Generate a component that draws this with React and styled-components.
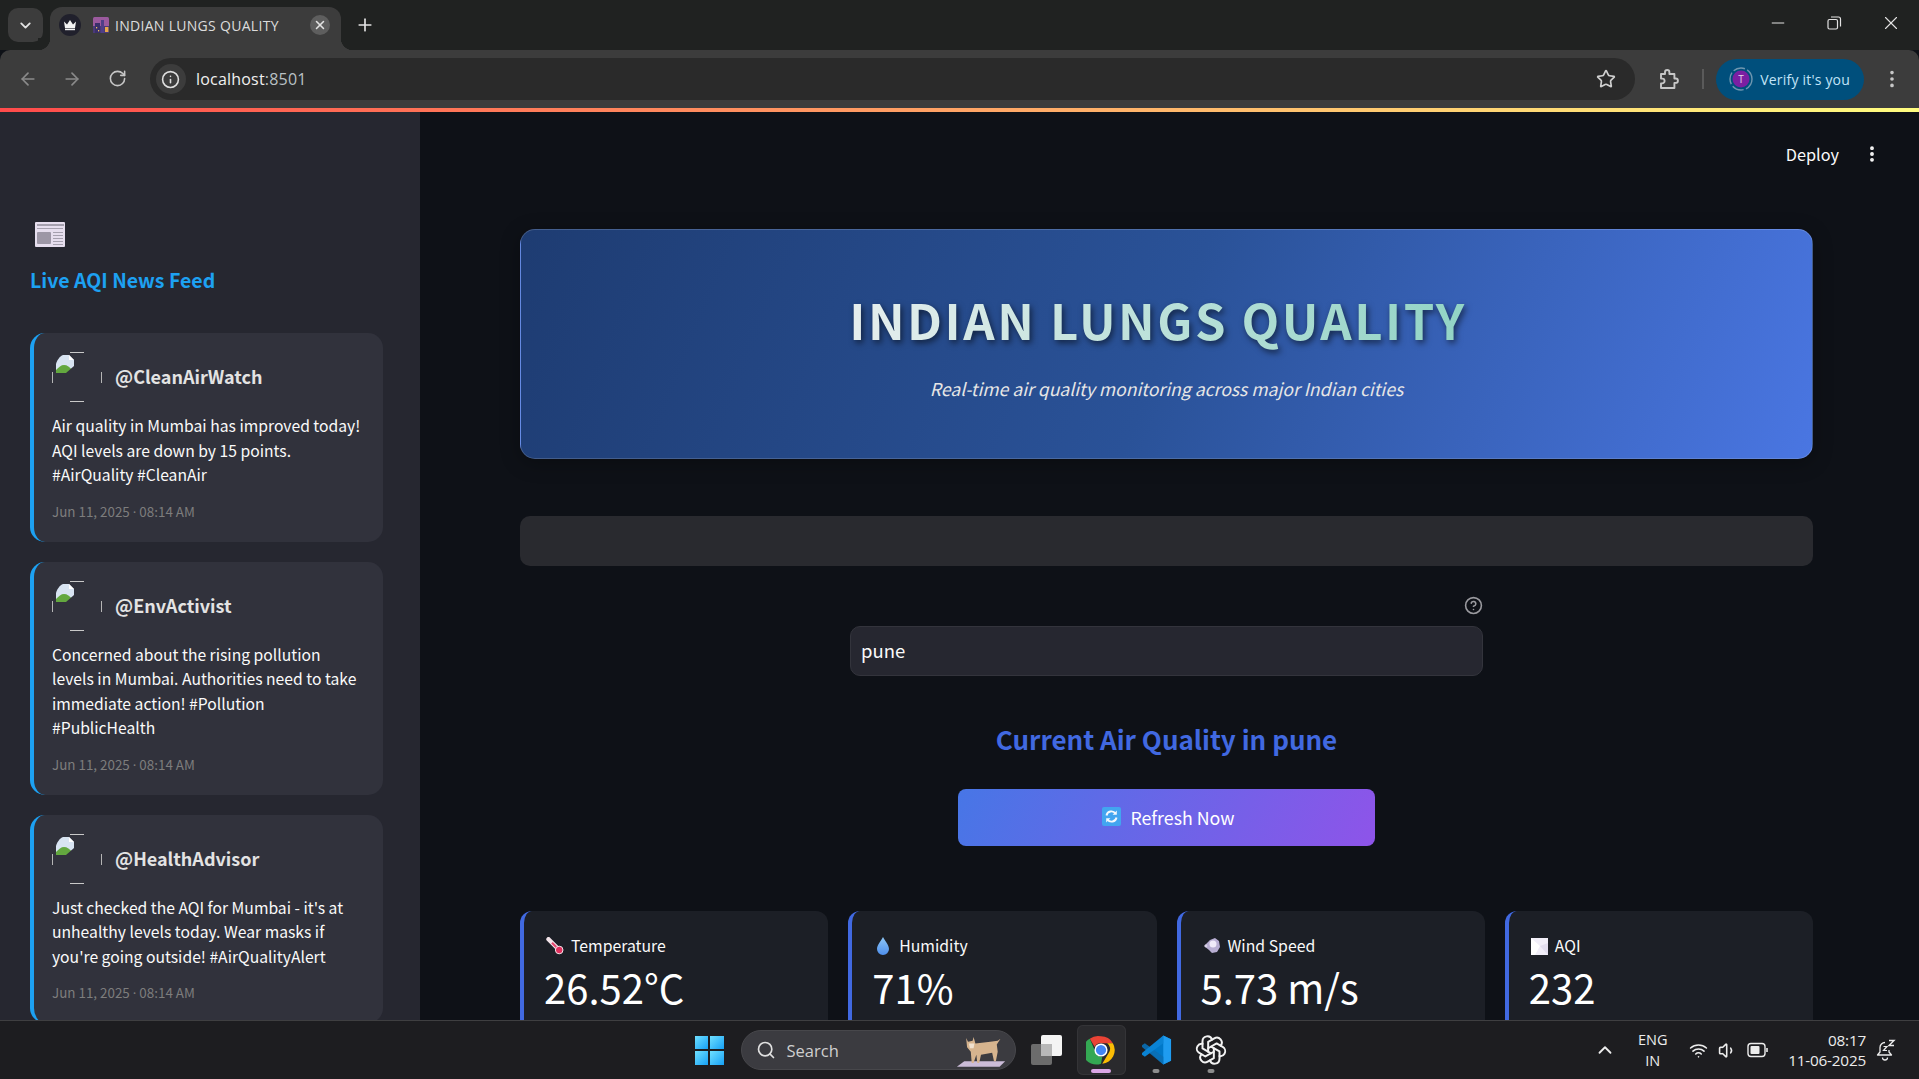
import React from "react";
import styled, { createGlobalStyle } from "styled-components";
import {
  ArrowLeft,
  ArrowRight,
  ChevronDown,
  ChevronUp,
  Info,
  Minus,
  MoreVertical,
  Plus,
  RotateCw,
  Search,
  Star,
  Volume1,
  Wifi,
  X,
  CircleHelp,
} from "lucide-react";
import { TbBrandOpenai } from "react-icons/tb";

const streamFont = '"Noto Sans CJK SC", "Noto Sans", sans-serif';
const chromeFont = '"Open Sans", "Noto Sans", sans-serif';

const GlobalStyle = createGlobalStyle`
  html, body {
    margin: 0;
    height: 100%;
    overflow: hidden;
    background: #0e1117;
  }
  * { box-sizing: border-box; }
`;

const Screen = styled.div`
  width: 1919px;
  height: 1079px;
  display: flex;
  flex-direction: column;
  overflow: hidden;
`;

/* browser chrome */
const TabStrip = styled.div`
  height: 50px;
  flex: none;
  background: #202221;
  display: flex;
  align-items: flex-end;
  padding-left: 8px;
  color: #e3e3e3;
  font-family: ${chromeFont};
`;
const TabListButton = styled.div`
  width: 35px;
  height: 34px;
  margin-bottom: 8px;
  border-radius: 10px;
  background: #3c3c3c;
  display: flex;
  align-items: center;
  justify-content: center;
`;
const Tab = styled.div`
  width: 291px;
  height: 43px;
  margin-left: 7px;
  padding: 0 11px 7px 9px;
  border-radius: 12px 12px 0 0;
  background: #3c3c3c;
  display: flex;
  align-items: center;
  position: relative;
  &::before,
  &::after {
    content: "";
    position: absolute;
    bottom: 0;
    width: 12px;
    height: 12px;
  }
  &::before {
    left: -12px;
    background: radial-gradient(circle at 0 0, #202221 12px, #3c3c3c 12.5px);
  }
  &::after {
    right: -12px;
    background: radial-gradient(circle at 100% 0, #202221 12px, #3c3c3c 12.5px);
  }
`;
const TabBadge = styled.div`
  width: 22px;
  height: 22px;
  border-radius: 50%;
  background: #20202c;
  display: flex;
  align-items: center;
  justify-content: center;
  margin-right: 12px;
`;
const TabTitle = styled.span`
  flex: 1;
  margin-left: 6px;
  font-size: 14px;
  letter-spacing: 0.3px;
  color: #dcdcdc;
  white-space: nowrap;
`;
const TabClose = styled.div`
  width: 20px;
  height: 20px;
  border-radius: 50%;
  background: #5e5e5e;
  display: flex;
  align-items: center;
  justify-content: center;
`;
const NewTab = styled.div`
  margin: 0 auto 8px 14px;
  height: 34px;
  display: flex;
  align-items: center;
`;
const WindowControls = styled.div`
  display: flex;
  align-self: flex-start;
  height: 46px;
  align-items: center;
  padding-right: 17px;
  gap: 36px;
`;
const RestoreIcon = () => (
  <svg width="20" height="20" viewBox="0 0 20 20" fill="none" stroke="#e3e3e3" strokeWidth="1.2">
    <rect x="4" y="6.5" width="9.5" height="9.5" rx="1.5" />
    <path d="M7 4h7.5a2 2 0 0 1 2 2v7.5" />
  </svg>
);

const Toolbar = styled.div`
  height: 58px;
  flex: none;
  background: #3c3c3c;
  border-radius: 10px 10px 0 0;
  display: flex;
  align-items: center;
  padding: 0 16px 0 18px;
  font-family: ${chromeFont};
`;
const NavButton = styled.div`
  width: 20px;
  height: 20px;
  margin-right: ${(p) => p.$gap}px;
  display: flex;
  color: ${(p) => (p.$off ? "#8a8a8a" : "#c7c7c7")};
`;
const Omnibox = styled.div`
  width: 1488px;
  height: 42px;
  border-radius: 21px;
  background: #2a2a2a;
  display: flex;
  align-items: center;
  padding: 0 19px 0 6px;
`;
const InfoChip = styled.div`
  width: 30px;
  height: 30px;
  border-radius: 50%;
  background: #3c3c3c;
  display: flex;
  align-items: center;
  justify-content: center;
  color: #dedede;
  margin-right: 10px;
`;
const Url = styled.div`
  flex: 1;
  font-size: 16px;
  letter-spacing: 0.2px;
  color: #f0f0f0;
  span {
    color: #b9c0c4;
  }
`;
const ToolbarIcon = styled.div`
  display: flex;
  color: #c7c7c7;
  margin-left: ${(p) => p.$left}px;
`;
const ToolbarDivider = styled.div`
  width: 2px;
  height: 20px;
  background: #5a5a5a;
  margin-left: 22px;
`;
const VerifyPill = styled.div`
  width: 148px;
  height: 41px;
  margin-left: 12px;
  border-radius: 21px;
  background: #004f7c;
  display: flex;
  align-items: center;
  padding-left: 13px;
  gap: 7px;
  color: #c2e4f8;
  font-size: 14px;
  letter-spacing: 0.2px;
  white-space: nowrap;
`;
const ProfileRing = () => (
  <svg width="24" height="24" viewBox="0 0 24 24">
    <circle cx="12" cy="12" r="11" fill="none" stroke="#6f97b0" strokeWidth="1.4" strokeDasharray="12 2.5" />
    <circle cx="12" cy="12" r="8.5" fill="#7b1fa2" />
    <text x="12" y="15.5" fontSize="10" textAnchor="middle" fill="#e8d6f0" fontFamily="Open Sans">T</text>
  </svg>
);
const ExtensionIcon = () => (
  <svg width="22" height="22" viewBox="0 0 22 22" fill="none" stroke="#c7c7c7" strokeWidth="1.9" strokeLinejoin="round">
    <path d="M3 6h4V4.2a2.2 2.2 0 0 1 4.4 0V6h5v4.5h1.3a2.2 2.2 0 0 1 0 4.4H16.4V20H3v-4.6h1.2a2.4 2.4 0 0 0 0-4.8H3z" />
  </svg>
);
const LoadBar = styled.div`
  height: 4px;
  flex: none;
  background: linear-gradient(90deg, #ff4b4b, #fffd80);
`;

/* page body */
const Body = styled.div`
  flex: 1;
  min-height: 0;
  display: flex;
  overflow: hidden;
  font-family: ${streamFont};
`;
const Sidebar = styled.aside`
  width: 420px;
  flex: none;
  background: #262730;
  padding: 110px 37px 0 30px;
  overflow: hidden;
`;
const SideIcon = styled.div`
  height: 26px;
  padding-left: 5px;
  display: flex;
`;
const SideTitle = styled.h3`
  margin: 17px 0 38px;
  font-size: 19.5px;
  line-height: 30px;
  font-weight: 700;
  color: #1da1f2;
  white-space: nowrap;
`;
const Feed = styled.div`
  display: flex;
  flex-direction: column;
  gap: 20px;
`;
const Post = styled.article`
  background: #31323c;
  border-left: 4px solid #1da1f2;
  border-radius: 15px;
  padding: 19px 18px 20px;
`;
const PostHead = styled.div`
  display: flex;
  align-items: center;
  gap: 13px;
  margin-bottom: 12px;
`;
const Handle = styled.span`
  font-size: 18px;
  font-weight: 700;
  color: #e3e3e3;
  position: relative;
  top: -1px;
`;
const PostText = styled.p`
  margin: 0;
  font-size: 15.7px;
  line-height: 24.5px;
  color: #fafafa;
`;
const PostTime = styled.div`
  margin-top: 13px;
  font-size: 13.4px;
  line-height: 20px;
  color: #7d7d7d;
`;
const MidDot = styled.span`
  font-family: "Noto Sans", sans-serif;
`;

const Main = styled.main`
  flex: 1;
  min-width: 0;
  background: #0e1117;
  padding: 0 106px 0 100px;
  overflow: hidden;
`;
const TopActions = styled.div`
  height: 84px;
  margin-right: -69px;
  display: flex;
  align-items: center;
  justify-content: flex-end;
  gap: 23px;
  color: #fafafa;
  font-size: 16.3px;
`;
const Hero = styled.section`
  margin-top: 33px;
  height: 230px;
  border-radius: 15px;
  border: 1px solid rgba(255, 255, 255, 0.16);
  background: linear-gradient(112deg, #1e3c72 0%, #2a5298 50%, #4a76e2 100%);
  box-shadow: 0 4px 20px rgba(0, 0, 0, 0.3);
  text-align: center;
  padding-top: 58px;
`;
const HeroTitle = styled.h1`
  margin: 0;
  font-size: 49px;
  line-height: 62px;
  font-weight: 700;
  letter-spacing: 2.5px;
  padding-right: 17px;
  background: linear-gradient(90deg, #e6eeee, #8fd3c4);
  -webkit-background-clip: text;
  background-clip: text;
  color: transparent;
  width: fit-content;
  margin-inline: auto;
  filter: drop-shadow(2px 3px 3px rgba(0, 0, 0, 0.55));
`;
const HeroSub = styled.p`
  margin: 24px 0 0;
  font-size: 17.6px;
  line-height: 30px;
  font-style: italic;
  color: #e6e6e6;
`;
const EmptyBar = styled.div`
  margin-top: 57px;
  height: 50px;
  border-radius: 10px;
  background: #292a2f;
`;
const CityField = styled.div`
  width: 633px;
  margin: 30px auto 0;
`;
const FieldLabel = styled.div`
  height: 30px;
  display: flex;
  justify-content: flex-end;
  color: #9a9a9f;
`;
const CityInput = styled.input`
  width: 100%;
  height: 50px;
  display: block;
  border-radius: 10px;
  border: 1px solid #33343c;
  background: #262730;
  padding: 0 10px 2px;
  font-family: ${streamFont};
  font-size: 18.5px;
  color: #fafafa;
  outline: none;
`;
const SectionHeading = styled.h2`
  margin: 43px 0 0;
  text-align: center;
  font-size: 26px;
  line-height: 40px;
  font-weight: 700;
  color: #4169e1;
`;
const RefreshButton = styled.button`
  display: flex;
  align-items: center;
  justify-content: center;
  gap: 9px;
  width: 417px;
  height: 57px;
  margin: 30px auto 0;
  border: none;
  border-radius: 8px;
  background: linear-gradient(115deg, #4776e6, #8e54e9);
  color: #fff;
  font-family: ${streamFont};
  font-size: 17.8px;
  padding: 0 0 2px 4px;
`;
const Metrics = styled.div`
  margin-top: 65px;
  display: grid;
  grid-template-columns: repeat(4, 1fr);
  gap: 20px;
`;
const MetricCard = styled.div`
  height: 150px;
  background: #1c1f26;
  border-left: 4px solid #4169e1;
  border-radius: 12px;
  padding: 23px 20px;
`;
const MetricLabel = styled.div`
  display: flex;
  align-items: center;
  gap: 7px;
  padding-left: 2px;
  font-size: 15.8px;
  line-height: 24px;
  color: #fafafa;
`;
const MetricValue = styled.div`
  margin-top: -1px;
  font-size: 40px;
  line-height: 60px;
  font-weight: 400;
  color: #fff;
`;

/* taskbar */
const Taskbar = styled.footer`
  height: 59px;
  flex: none;
  background: #1d1d20;
  border-top: 1px solid #3f3f41;
  display: grid;
  grid-template-columns: 1fr auto 1fr;
  align-items: center;
  color: #ececec;
  font-family: ${chromeFont};
`;
const TaskCenter = styled.div`
  grid-column: 2;
  display: flex;
  align-items: center;
  gap: 6px;
  padding-left: 3px;
`;
const TaskTile = styled.div`
  width: 49px;
  height: 50px;
  position: relative;
  border-radius: 6px;
  display: flex;
  align-items: center;
  justify-content: center;
  background: ${(p) => (p.$active ? "#2a2a2d" : "transparent")};
  box-shadow: ${(p) => (p.$active ? "inset 0 0 0 1px #343437" : "none")};
`;
const RunDot = styled.span`
  position: absolute;
  bottom: 2px;
  left: 50%;
  transform: translateX(-50%);
  height: 4px;
  border-radius: 2px;
  width: ${(p) => (p.$active ? 20 : 7)}px;
  background: ${(p) => (p.$active ? "#dba6e6" : "#8c8c8c")};
`;
const WinLogo = styled.div`
  width: 29px;
  height: 29px;
  margin-right: 4px;
  display: grid;
  grid-template-columns: 1fr 1fr;
  gap: 1.5px;
  span {
    background: linear-gradient(135deg, #6fe0ff, #16a0f5);
  }
`;
const SearchPill = styled.div`
  width: 275px;
  height: 40px;
  margin-left: -1px;
  border-radius: 20px;
  background: #3b3b40;
  border: 1px solid #47474b;
  display: flex;
  align-items: center;
  padding: 0 8px 0 14px;
  gap: 11px;
  font-size: 16.5px;
  color: #cfcfcf;
  span {
    flex: 1;
  }
`;
const Tray = styled.div`
  grid-column: 3;
  justify-self: end;
  display: flex;
  align-items: center;
  padding-right: 23px;
`;
const LangBlock = styled.div`
  margin: 0 21.7px 0 22.3px;
  text-align: center;
  font-size: 14.5px;
  line-height: 21px;
`;
const TrayIcons = styled.div`
  display: flex;
  align-items: center;
  gap: 10px;
`;
const Clock = styled.div`
  margin: 0 10px 0 19px;
  text-align: right;
  font-size: 15.3px;
  line-height: 20px;
  letter-spacing: -0.2px;
`;

/* drawn emoji and logos */
const CrownIcon = () => (
  <svg width="14" height="12" viewBox="0 0 14 12">
    <path d="M1 2.5l3 3L7 1l3 4.5 3-3L12 9H2z" fill="#f4f4f4" />
    <rect x="2" y="9.6" width="10" height="1.6" fill="#f4f4f4" />
  </svg>
);
const CityIcon = () => (
  <svg width="16" height="16" viewBox="0 0 16 16">
    <rect width="16" height="16" rx="1.5" fill="#9b5a9e" />
    <rect y="9" width="16" height="7" fill="#4a3a78" />
    <rect x="2" y="6" width="5" height="10" fill="#3a2f6a" />
    <rect x="8" y="3" width="3" height="13" fill="#4f3f88" />
    <rect x="12" y="10" width="3.4" height="5" fill="#e8a84a" />
    <rect x="3" y="10" width="1.2" height="1.4" fill="#f0c060" />
    <rect x="5" y="13" width="1.2" height="1.4" fill="#f0c060" />
  </svg>
);
const NewspaperEmoji = () => (
  <svg width="30" height="25" viewBox="0 0 30 25">
    <rect width="30" height="25" rx="1" fill="#e6deee" />
    <rect x="2" y="2" width="27" height="2" fill="#a5a0ae" />
    <rect x="2" y="6" width="26" height="1" fill="#a5a0ae" />
    <rect x="2" y="10" width="14" height="12" rx="1" fill="#9d97a6" />
    <path d="M18 10.5h10M18 13.5h10M18 16.5h10M18 19.5h10M18 22.5h10" stroke="#a5a0ae" />
  </svg>
);
const BrokenAvatar = () => (
  <svg width="50" height="50" viewBox="0 0 50 50" style={{ flex: "none" }}>
    <path d="M18 .5h14M18 49.5h14" stroke="#c9c9c9" />
    <path d="M.5 20v11M49.5 20v11" stroke="#b5b5b5" />
    <path d="M4 21v-9C5 8 8 4 11 3h6l5 5v13z" fill="#d8e4f2" />
    <path d="M4 21v-3c3-3 5-5 8-5s6 2 8 5v3z" fill="#63a83f" />
    <path d="M17 3v5h5z" fill="#fff" />
    <path d="M14 21l8-7v7z" fill="#31323c" />
  </svg>
);
const ThermometerEmoji = () => (
  <svg width="18" height="18" viewBox="0 0 18 18">
    <path d="M2.5 2.2L13 12.7" stroke="#f3e4ea" strokeWidth="4.4" strokeLinecap="round" />
    <path d="M6 5.7L13 12.7" stroke="#e5476f" strokeWidth="2.2" />
    <circle cx="13.2" cy="13" r="3.8" fill="#e02f5d" stroke="#f3e4ea" />
  </svg>
);
const DropEmoji = () => (
  <svg width="18" height="20" viewBox="0 0 18 20">
    <defs>
      <linearGradient id="drop" x1="0" y1="0" x2="0" y2="1">
        <stop offset="0" stopColor="#8fc7f7" />
        <stop offset="1" stopColor="#4e8fec" />
      </linearGradient>
    </defs>
    <path d="M9 1c2 4 6 8 6 12a6 6 0 0 1-12 0c0-4 4-8 6-12z" fill="url(#drop)" />
  </svg>
);
const WindEmoji = () => (
  <svg width="18" height="18" viewBox="0 0 18 18">
    <path d="M1 9l6-6 5-2 4 3 1 6-3 5-5 1-3-3z" fill="#b8aed2" />
    <circle cx="10" cy="7" r="3.5" fill="#efeaf8" />
    <circle cx="3" cy="9" r="1.4" fill="#d8d2e6" />
  </svg>
);
const TileEmoji = () => (
  <svg width="17" height="17" viewBox="0 0 17 17">
    <rect width="17" height="17" fill="#f1eef8" />
    <path d="M0 0l9 8-5 9H0z" fill="#fff" />
    <path d="M17 17l-8-9 8-3z" fill="#e3deef" />
  </svg>
);
const RefreshEmoji = () => (
  <svg width="19" height="19" viewBox="0 0 19 19">
    <rect width="19" height="19" rx="2" fill="#42a5f0" />
    <path d="M4.5 8.5a5 5 0 0 1 9-2M14.5 10.5a5 5 0 0 1-9 2" fill="none" stroke="#f4f8fc" strokeWidth="1.9" />
    <path d="M14.8 3.5v4.2h-4.2zM4.2 15.5v-4.2h4.2z" fill="#f4f8fc" />
  </svg>
);
const TaskViewIcon = () => (
  <svg width="31" height="30" viewBox="0 0 31 30">
    <rect x="10" y="0" width="21" height="21" rx="2" fill="#f4f4f4" />
    <rect x="0" y="9" width="21" height="21" rx="2" fill="#6c6c6c" />
    <rect x="10" y="9" width="11" height="12" fill="#b8b8b8" />
  </svg>
);
const ChromeIcon = () => (
  <svg width="30" height="30" viewBox="0 0 48 48">
    <path d="M24 2a22 22 0 0 1 19 11H24a11 11 0 0 0-10 6L6 6a22 22 0 0 1 18-4z" fill="#ea4335" />
    <path d="M43 13a22 22 0 0 1-17 33l10-17a11 11 0 0 0-2-16z" fill="#fbbc04" />
    <path d="M6 6l10 23a11 11 0 0 0 10 6l-2 11A22 22 0 0 1 6 6z" fill="#34a853" />
    <circle cx="24" cy="24" r="10.5" fill="#fff" />
    <circle cx="24" cy="24" r="8.2" fill="#4285f4" />
  </svg>
);
const VsCodeIcon = () => (
  <svg width="31" height="32" viewBox="0 0 32 32">
    <path d="M23 1l8 4v22l-8 4-13-12z" fill="#0078c8" />
    <path d="M23 1v30l8-4V5z" fill="#1f9cf0" />
    <path d="M1 11l3-2 19 14v8L1 13z" fill="#0a6fb5" opacity="0.9" />
    <path d="M1 21l3 2L23 9V1L1 19z" fill="#0a83d4" />
  </svg>
);
const CatMascot = () => (
  <svg width="52" height="38" viewBox="0 0 56 40">
    <path d="M2 38l8-6h44l-6 6z" fill="#cbbcd8" />
    <path d="M12 7l2 4 5-1 1-4 2 7 16-2 8-1 3-2-4 6 1 8-2 10h-2l-2-9-12 2-2 9h-2l-1-9-3 9h-2l-1-12-4-5z" fill="#d6b48e" />
    <path d="M15 13h6l-1 5h-4z" fill="#f1e2cf" />
  </svg>
);
const BatteryIcon = () => (
  <svg width="22" height="16" viewBox="0 0 22 16" fill="none">
    <rect x="1" y="1.5" width="17" height="13" rx="3" stroke="#ececec" strokeWidth="1.4" />
    <rect x="3.5" y="4" width="9" height="8" rx="1" fill="#ececec" />
    <path d="M20 6v4" stroke="#ececec" strokeWidth="1.6" />
  </svg>
);
const FocusBell = () => (
  <svg width="20" height="22" viewBox="0 0 20 22" fill="none" stroke="#ececec" strokeWidth="1.3">
    <path d="M9 3.5a5 5 0 0 0-5 5V13l-2.5 3h14L13 13v-2" strokeLinejoin="round" />
    <path d="M6.5 18.5a2.5 2.5 0 0 0 5 0" />
    <path d="M13 1.5h5l-5 5h5" strokeWidth="1.4" />
    <path d="M7.5 7.5h3.5l-3.5 4H11" strokeWidth="1.2" />
  </svg>
);

const posts = [
  {
    handle: "@CleanAirWatch",
    text: "Air quality in Mumbai has improved today! AQI levels are down by 15 points. #AirQuality #CleanAir",
  },
  {
    handle: "@EnvActivist",
    text: "Concerned about the rising pollution levels in Mumbai. Authorities need to take immediate action! #Pollution #PublicHealth",
  },
  {
    handle: "@HealthAdvisor",
    text: "Just checked the AQI for Mumbai - it's at unhealthy levels today. Wear masks if you're going outside! #AirQualityAlert",
  },
];

const metrics = [
  { label: "Temperature", value: "26.52°C", icon: <ThermometerEmoji /> },
  { label: "Humidity", value: "71%", icon: <DropEmoji /> },
  { label: "Wind Speed", value: "5.73 m/s", icon: <WindEmoji /> },
  { label: "AQI", value: "232", icon: <TileEmoji /> },
];

const App = () => {
  return (
    <Screen>
      <GlobalStyle />
      <TabStrip>
        <TabListButton>
          <ChevronDown size={17} strokeWidth={2.6} />
        </TabListButton>
        <Tab>
          <TabBadge>
            <CrownIcon />
          </TabBadge>
          <CityIcon />
          <TabTitle>INDIAN LUNGS QUALITY</TabTitle>
          <TabClose>
            <X size={14} strokeWidth={2.6} />
          </TabClose>
        </Tab>
        <NewTab>
          <Plus size={20} strokeWidth={2} />
        </NewTab>
        <WindowControls>
          <Minus size={20} strokeWidth={1.2} />
          <RestoreIcon />
          <X size={22} strokeWidth={1.2} />
        </WindowControls>
      </TabStrip>
      <Toolbar>
        <NavButton $off $gap={24}>
          <ArrowLeft size={20} />
        </NavButton>
        <NavButton $off $gap={26}>
          <ArrowRight size={20} />
        </NavButton>
        <NavButton $gap={22}>
          <RotateCw size={19} />
        </NavButton>
        <Omnibox>
          <InfoChip>
            <Info size={19} />
          </InfoChip>
          <Url>
            localhost<span>:8501</span>
          </Url>
          <Star size={20} color="#d0d0d0" />
        </Omnibox>
        <ToolbarIcon $left={23}>
          <ExtensionIcon />
        </ToolbarIcon>
        <ToolbarDivider />
        <VerifyPill>
          <ProfileRing />
          Verify it's you
        </VerifyPill>
        <ToolbarIcon $left={17}>
          <MoreVertical size={22} />
        </ToolbarIcon>
      </Toolbar>
      <LoadBar />
      <Body>
        <Sidebar>
          <SideIcon>
            <NewspaperEmoji />
          </SideIcon>
          <SideTitle>Live AQI News Feed</SideTitle>
          <Feed>
            {posts.map((post) => (
              <Post key={post.handle}>
                <PostHead>
                  <BrokenAvatar />
                  <Handle>{post.handle}</Handle>
                </PostHead>
                <PostText>{post.text}</PostText>
                <PostTime>
                  Jun 11, 2025 <MidDot>·</MidDot> 08:14 AM
                </PostTime>
              </Post>
            ))}
          </Feed>
        </Sidebar>
        <Main>
          <TopActions>
            Deploy
            <MoreVertical size={20} strokeWidth={2.6} />
          </TopActions>
          <Hero>
            <HeroTitle>INDIAN LUNGS QUALITY</HeroTitle>
            <HeroSub>Real-time air quality monitoring across major Indian cities</HeroSub>
          </Hero>
          <EmptyBar />
          <CityField>
            <FieldLabel>
              <CircleHelp size={19} />
            </FieldLabel>
            <CityInput defaultValue="pune" />
          </CityField>
          <SectionHeading>Current Air Quality in pune</SectionHeading>
          <RefreshButton>
            <RefreshEmoji />
            Refresh Now
          </RefreshButton>
          <Metrics>
            {metrics.map((metric) => (
              <MetricCard key={metric.label}>
                <MetricLabel>
                  {metric.icon}
                  {metric.label}
                </MetricLabel>
                <MetricValue>{metric.value}</MetricValue>
              </MetricCard>
            ))}
          </Metrics>
        </Main>
      </Body>
      <Taskbar>
        <TaskCenter>
          <TaskTile>
            <WinLogo>
              <span />
              <span />
              <span />
              <span />
            </WinLogo>
          </TaskTile>
          <SearchPill>
            <Search size={20} color="#e0e0e0" />
            <span>Search</span>
            <CatMascot />
          </SearchPill>
          <TaskTile>
            <TaskViewIcon />
          </TaskTile>
          <TaskTile $active>
            <ChromeIcon />
            <RunDot $active />
          </TaskTile>
          <TaskTile>
            <VsCodeIcon />
            <RunDot />
          </TaskTile>
          <TaskTile>
            <TbBrandOpenai size={34} color="#f2f2f2" strokeWidth={1.4} />
            <RunDot />
          </TaskTile>
        </TaskCenter>
        <Tray>
          <ChevronUp size={22} />
          <LangBlock>
            ENG
            <br />
            IN
          </LangBlock>
          <TrayIcons>
            <Wifi size={19} />
            <Volume1 size={19} />
            <BatteryIcon />
          </TrayIcons>
          <Clock>
            08:17
            <br />
            11-06-2025
          </Clock>
          <FocusBell />
        </Tray>
      </Taskbar>
    </Screen>
  );
};

export default App;
